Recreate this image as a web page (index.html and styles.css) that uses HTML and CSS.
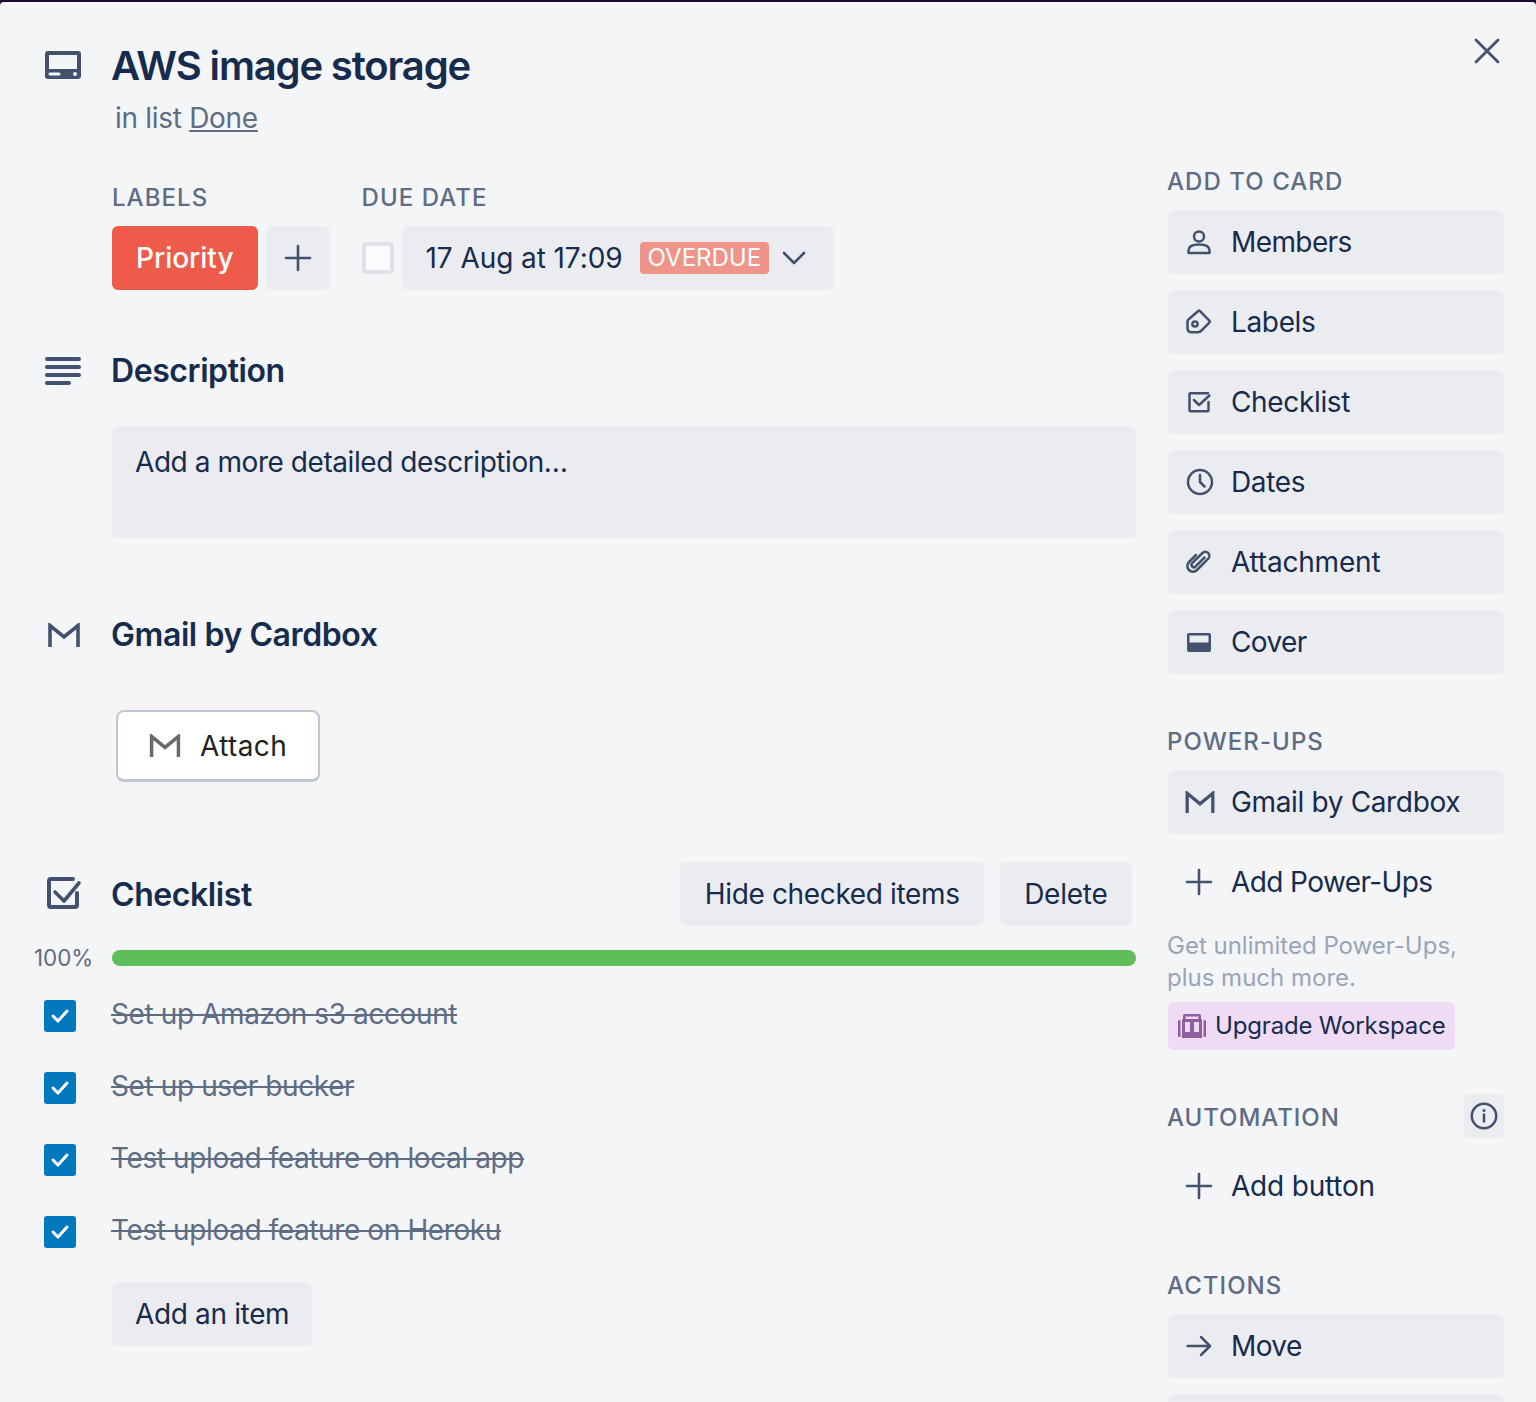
FILE: index.html
```html
<!DOCTYPE html>
<html lang="en">
<head>
<meta charset="utf-8">
<title>AWS image storage</title>
<link rel="stylesheet" href="styles.css">
</head>
<body>
<svg class="defs" width="0" height="0" aria-hidden="true">
  <symbol id="i-gmail" viewBox="0 0 32 24"><path d="M2 24V2.5L16 14 30 2.5V24" fill="none" stroke="currentColor" stroke-width="3.6"/></symbol>
  <symbol id="i-plus" viewBox="0 0 32 32"><path d="M16 4v24M4 16h24" fill="none" stroke="currentColor" stroke-width="2.6" stroke-linecap="round"/></symbol>
  <symbol id="i-tick" viewBox="0 0 20 16"><path d="M3 8l5 5L17 3" fill="none" stroke="#fff" stroke-width="3" stroke-linecap="round" stroke-linejoin="round"/></symbol>
</svg>
<div class="modal">
  <header class="card-head">
    <div class="gutter">
      <svg class="ico-card" width="36" height="28" viewBox="0 0 36 28"><path fill-rule="evenodd" d="M3 0h30a3 3 0 0 1 3 3v22a3 3 0 0 1-3 3H3a3 3 0 0 1-3-3V3a3 3 0 0 1 3-3zm1 4v14h28V4H4zm1 17.500a1.500 1.500 0 0 0 0 3h9a1.500 1.500 0 0 0 0-3H5zM30 21a2 2 0 1 0 0 4 2 2 0 0 0 0-4z" fill="#42526E"/></svg>
    </div>
    <div class="head-text">
      <h1 class="card-title">AWS image storage</h1>
      <p class="card-sub">in list <a class="list-link" href="#">Done</a></p>
    </div>
    <svg class="close" width="28" height="28" viewBox="0 0 28 28"><path d="M3 3l22 22M25 3L3 25" fill="none" stroke="#42526E" stroke-width="2.800" stroke-linecap="round"/></svg>
  </header>
  <div class="columns">
    <main class="main">
      <section class="row row-meta">
        <div></div>
        <div class="meta">
          <div class="meta-group">
            <h3 class="eyebrow">LABELS</h3>
            <div class="meta-controls tight">
              <span class="label-chip">Priority</span>
              <span class="btn square"><svg width="32" height="32"><use href="#i-plus"/></svg></span>
            </div>
          </div>
          <div class="meta-group">
            <h3 class="eyebrow">DUE DATE</h3>
            <div class="meta-controls tight">
              <span class="due-check"></span>
              <span class="btn due">
                <span class="due-text">17 Aug at 17:09</span>
                <span class="overdue">OVERDUE</span>
                <svg class="chev" width="24" height="14" viewBox="0 0 24 14"><path d="M2 2l10 10L22 2" fill="none" stroke="#42526E" stroke-width="2.600" stroke-linecap="round" stroke-linejoin="round"/></svg>
              </span>
            </div>
          </div>
        </div>
      </section>

      <section class="row row-desc">
        <div class="gutter center desc-gutter">
          <svg width="36" height="28" viewBox="0 0 36 28"><path d="M2 2h32M2 10h32M2 18h32M2 26h22" fill="none" stroke="#42526E" stroke-width="4" stroke-linecap="round"/></svg>
        </div>
        <h2 class="sec-title">Description</h2>
        <div></div>
        <div class="desc-box">Add a more detailed description…</div>
      </section>

      <section class="row row-gmail">
        <div class="gutter center">
          <svg class="ico-gmail-lg" width="32" height="24"><use href="#i-gmail"/></svg>
        </div>
        <h2 class="sec-title">Gmail by Cardbox</h2>
        <div></div>
        <div class="attach-panel">
          <span class="attach-btn"><svg class="ico-gmail-att" width="32" height="23"><use href="#i-gmail"/></svg>Attach</span>
        </div>
      </section>

      <section class="row row-check">
        <div class="gutter center">
          <svg width="36" height="34" viewBox="0 0 36 34"><path d="M27 2H5a2 2 0 0 0-2 2v24a2 2 0 0 0 2 2h24a2 2 0 0 0 2-2V16" fill="none" stroke="#42526E" stroke-width="4" stroke-linecap="round"/><path d="M9 15l9 9L33 6" fill="none" stroke="#42526E" stroke-width="3.600" stroke-linecap="round" stroke-linejoin="round"/></svg>
        </div>
        <div class="check-head">
          <h2 class="sec-title">Checklist</h2>
          <div class="check-actions">
            <span class="btn pad">Hide checked items</span>
            <span class="btn pad delete">Delete</span>
          </div>
        </div>
        <div class="pct">100%</div>
        <div class="progress"></div>
      </section>

      <ul class="items">
        <li class="row item"><div class="gutter"><span class="tick"><svg width="20" height="16"><use href="#i-tick"/></svg></span></div><span class="item-text">Set up Amazon s3 account</span></li>
        <li class="row item"><div class="gutter"><span class="tick"><svg width="20" height="16"><use href="#i-tick"/></svg></span></div><span class="item-text">Set up user bucker</span></li>
        <li class="row item"><div class="gutter"><span class="tick"><svg width="20" height="16"><use href="#i-tick"/></svg></span></div><span class="item-text">Test upload feature on local app</span></li>
        <li class="row item"><div class="gutter"><span class="tick"><svg width="20" height="16"><use href="#i-tick"/></svg></span></div><span class="item-text">Test upload feature on Heroku</span></li>
      </ul>
      <div class="row row-add">
        <div></div>
        <div><span class="btn add-item">Add an item</span></div>
      </div>
    </main>

    <aside class="side">
      <h3 class="eyebrow side-first">ADD TO CARD</h3>
      <div class="stack">
        <a class="side-btn ls-tight"><svg width="32" height="32" viewBox="0 0 32 32"><g fill="none" stroke="#42526E" stroke-width="2.500"><circle cx="16" cy="10.500" r="5"/><path d="M5.500 27v-2.500c0-4 4.500-6 10.500-6s10.500 2 10.500 6V27z" stroke-linejoin="round"/></g></svg>Members</a>
        <a class="side-btn"><svg width="32" height="32" viewBox="0 0 32 32"><g fill="none" stroke="#42526E" stroke-width="2.500" stroke-linejoin="round"><path d="M15 5.200q1-1 2 0l9.300 9.400q1 1 0 2L18 25q-1 1-3 1.300H8.500q-4 0-4-4.300v-6.500q0-1.500 1.500-2.500z"/><circle cx="12" cy="18" r="2.600"/></g></svg>Labels</a>
        <a class="side-btn"><svg width="32" height="32" viewBox="0 0 32 32"><g fill="none" stroke="#42526E" stroke-width="2.500" stroke-linecap="round" stroke-linejoin="round"><path d="M25 7.200H7.500a1 1 0 0 0-1 1v16a1 1 0 0 0 1 1h17a1 1 0 0 0 1-1V16"/><path d="M11 14l5 5L26.500 9.500"/></g></svg>Checklist</a>
        <a class="side-btn"><svg width="32" height="32" viewBox="0 0 32 32"><g fill="none" stroke="#42526E" stroke-width="2.500" stroke-linecap="round" stroke-linejoin="round"><circle cx="17" cy="16" r="12"/><path d="M17 9v7l4.500 4.500"/></g></svg>Dates</a>
        <a class="side-btn ls-loose"><svg width="32" height="32" viewBox="0 0 32 32"><path d="M21.500 11.500l-9 9a2.300 2.300 0 0 1-3.300-3.300L19.500 7a4 4 0 0 1 5.700 5.700L14 24a5.600 5.600 0 0 1-8-8l7-7" fill="none" stroke="#42526E" stroke-width="2.500" stroke-linecap="round"/></svg>Attachment</a>
        <a class="side-btn ls-tight"><svg width="32" height="32" viewBox="0 0 32 32"><path fill-rule="evenodd" d="M6 7h20a2 2 0 0 1 2 2v15a2 2 0 0 1-2 2H6a2 2 0 0 1-2-2V9a2 2 0 0 1 2-2zm.500 2.500v7h19v-7h-19z" fill="#42526E"/></svg>Cover</a>
      </div>

      <h3 class="eyebrow side-power">POWER-UPS</h3>
      <div class="stack">
        <a class="side-btn"><svg class="ico-gmail-sm" width="30" height="22"><use href="#i-gmail"/></svg>Gmail by Cardbox</a>
        <a class="side-btn plain ls-tight"><svg class="ico" width="32" height="32"><use href="#i-plus"/></svg>Add Power-Ups</a>
      </div>
      <p class="promo">Get unlimited Power-Ups,<br>plus much more.</p>
      <a class="upgrade"><svg width="28" height="24" viewBox="0 0 28 24"><g fill="#8F5F9E"><rect x="0" y="6" width="2.500" height="17" rx="1"/><rect x="25.500" y="6" width="2.500" height="17" rx="1"/><path fill-rule="evenodd" d="M7 0h14a2 2 0 0 1 2 2v3h1v19H4V5h1V2a2 2 0 0 1 2-2zm.500 2.500V5h13V2.500h-13zM7 8v10h5V8H7zm9 0v10h5V8h-5z"/></g></svg>Upgrade Workspace</a>

      <div class="auto-head">
        <h3 class="eyebrow">AUTOMATION</h3>
        <span class="info"><svg width="28" height="28" viewBox="0 0 28 28"><circle cx="14" cy="14" r="12.200" fill="none" stroke="#42526E" stroke-width="2.500"/><path d="M14 12.500v7" stroke="#42526E" stroke-width="2.500" stroke-linecap="round"/><circle cx="14" cy="8.500" r="1.500" fill="#42526E"/></svg></span>
      </div>
      <a class="side-btn plain auto-add ls-loose"><svg class="ico" width="32" height="32"><use href="#i-plus"/></svg>Add button</a>

      <h3 class="eyebrow side-actions">ACTIONS</h3>
      <div class="stack">
        <a class="side-btn ls-tight"><svg width="32" height="32" viewBox="0 0 32 32"><path d="M4.500 16h22M18 7l9 9-9 9" fill="none" stroke="#42526E" stroke-width="2.500" stroke-linecap="round" stroke-linejoin="round"/></svg>Move</a>
        <a class="side-btn"></a>
      </div>
    </aside>
  </div>
</div>
</body>
</html>
```
FILE: styles.css
```css
* { box-sizing: border-box; }
html, body { margin: 0; height: 1402px; overflow: hidden; }
body {
  background: #1b0c2e;
  font-family: Inter, "Liberation Sans", sans-serif;
  font-size: 28px;
  line-height: 40px;
  letter-spacing: -0.35px;
  color: #172B4D;
}
.defs { position: absolute; }
.modal {
  margin-top: 2px;
  height: 1400px;
  background: #F4F5F7;
  border-radius: 4px 4px 0 0;
  overflow: hidden;
  color: #172B4D;
}
h1, h2, h3, p, ul { margin: 0; padding: 0; }
ul { list-style: none; }

.card-head {
  display: flex;
  height: 166px;
  padding: 40px 32px 0 0;
}
.gutter { width: 112px; padding-left: 44px; flex: none; }
.card-head .gutter { padding-left: 45px; padding-top: 9px; }
.desc-gutter { padding-left: 45px; }
.ico-card { display: block; }
.head-text { flex: 1; }
.card-title { margin-left: -1px; font-size: 40px; line-height: 48px; font-weight: 600; letter-spacing: -1.150px; }
.card-sub { margin-top: 6px; padding-left: 3px; line-height: 44px; color: #5E6C84; letter-spacing: -0.300px; }
.list-link { color: #5E6C84; text-decoration: underline; }
.close { margin: -5px 3px 0 0; flex: none; }

.columns { display: grid; grid-template-columns: 1136px 336px; column-gap: 32px; }
.row { display: grid; grid-template-columns: 112px 1fr; }
.center { display: flex; align-items: center; }

.eyebrow { margin-left: -1px; font-size: 24px; line-height: 28px; font-weight: 500; letter-spacing: 1.050px; color: #5E6C84; }
.meta-group .eyebrow { margin-left: 0; }

.meta { display: flex; gap: 32px; padding-top: 16px; }
.meta-controls { display: flex; margin-top: 14px; }
.tight { gap: 8px; }
.btn { display: inline-flex; align-items: center; background: #EBECF0; border-radius: 6px; height: 64px; color: #172B4D; }
.square { width: 64px; justify-content: center; color: #42526E; }
.label-chip { display: inline-flex; align-items: center; height: 64px; padding: 0 24px; background: #EF5B4A; color: #fff; border-radius: 6px; font-weight: 500; letter-spacing: 0; }
.due-check { align-self: center; width: 32px; height: 32px; background: #FAFBFC; border: 4px solid #DFE1E6; border-radius: 4px; }
.due { padding: 0 28px 0 24px; }
.due-text { letter-spacing: -0.080px; }
.overdue { display: inline-flex; align-items: center; height: 32px; margin-left: 17px; padding: 0 8px; background: #EE9488; color: #fff; font-size: 24px; letter-spacing: 0; border-radius: 4px; }
.chev { margin-left: 13px; }

.sec-title { margin-left: -1px; font-size: 32px; line-height: 40px; font-weight: 600; letter-spacing: -0.420px; }
.row-desc { margin-top: 61px; }
.desc-box { margin-top: 35px; height: 112px; padding: 16px 23px 0; background: #EBECF0; border-radius: 6px; letter-spacing: -0.440px; }
.row-gmail { margin-top: 77px; }
.ico-gmail-lg { color: #42526E; margin-left: 4px; }
.attach-panel { margin-top: 35px; height: 106px; padding: 20px 4px; background: #F5F5F6; }
.attach-btn {
  display: inline-flex; align-items: center; gap: 19px;
  width: 204px; height: 72px; padding-left: 31px;
  background: #fff; border: 2px solid #C1C7D0; border-bottom-width: 3px; border-radius: 8px; color: #222;
  letter-spacing: 0.400px;
}
.ico-gmail-att { color: #68686D; }
.row-check { margin-top: 66px; row-gap: 24px; }
.check-head { display: flex; align-items: center; justify-content: space-between; padding-right: 4px; }
.check-head .sec-title { padding-top: 2px; }
.check-actions { display: flex; gap: 16px; }
.pad { padding: 0 24.500px; }
.delete { padding: 0 24.500px 0 24px; letter-spacing: -0.250px; }
.row-check .gutter { padding-left: 46px; }
.pct { padding-left: 34px; font-size: 22.400px; line-height: 16px; letter-spacing: 0; color: #5E6C84; }
.progress { height: 16px; background: #5FBE5A; border-radius: 8px; }

.items { margin-top: 16px; }
.item { height: 72px; }
.item .gutter { padding-top: 18px; }
.tick { display: flex; align-items: center; justify-content: center; width: 32px; height: 32px; background: #0079BF; border-radius: 3px; }
.item-text { margin-left: -1px; line-height: 64px; color: #5E6C84; text-decoration: line-through; letter-spacing: -0.390px; }
.row-add { margin-top: 12px; }
.add-item { padding: 0 23px; }

.side-first { margin-bottom: 14px; }
.stack { display: flex; flex-direction: column; gap: 16px; }
.side-btn {
  display: flex; align-items: center; gap: 16px;
  height: 64px; padding-left: 15px;
  background: #EBECF0; border-radius: 6px; color: #172B4D;
}
.ls-tight { letter-spacing: -0.600px; }
.ls-loose { letter-spacing: -0.200px; }
.side-btn.plain { background: transparent; }
.ico { color: #42526E; }
.ico-gmail-sm { color: #42526E; margin-left: 2px; }
.side-power { margin-top: 54px; margin-bottom: 14px; }
.promo { margin-top: 16px; margin-left: -1px; font-size: 24px; line-height: 32px; letter-spacing: 0; color: #9AA5B8; }
.upgrade {
  display: inline-flex; align-items: center; gap: 9px;
  height: 48px; margin-top: 8px; padding: 0 9px 0 10px;
  background: #EFDBF4; border-radius: 6px; font-size: 24px; line-height: 32px; letter-spacing: -0.170px; color: #172B4D;
}
.auto-head { display: flex; align-items: center; justify-content: space-between; margin-top: 44px; }
.auto-head .eyebrow { padding-top: 4px; letter-spacing: 0.950px; }
.info { display: flex; align-items: center; justify-content: center; width: 40px; height: 44px; background: #EBECF0; border-radius: 6px; }
.auto-add { margin-top: 16px; }
.side-actions { margin-top: 54px; margin-bottom: 14px; }
```
